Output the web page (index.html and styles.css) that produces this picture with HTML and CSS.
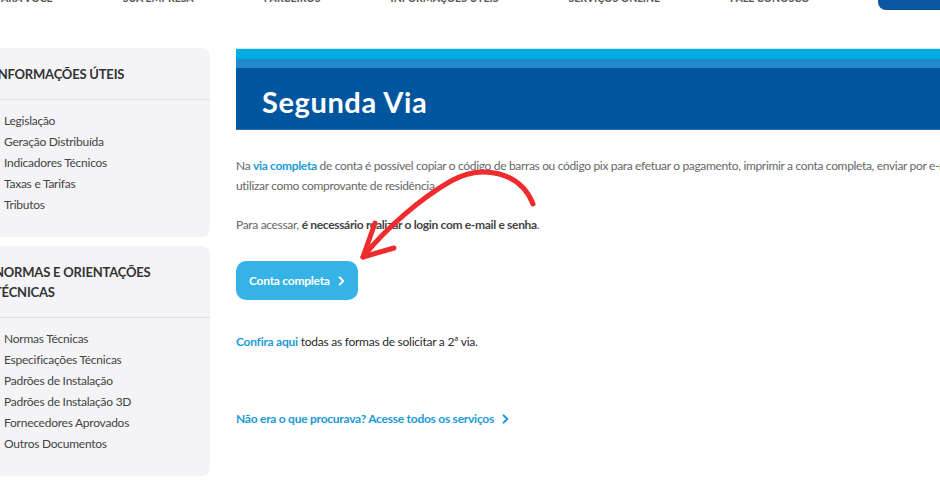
FILE: index.html
```html
<!DOCTYPE html>
<html lang="pt-BR">
<head>
    <meta charset="UTF-8">
    <meta name="viewport" content="width=device-width, initial-scale=1.0">
    <title>Segunda Via</title>
    <link rel="stylesheet" href="styles.css">
</head>
<body>
    <header class="topbar">
        <nav class="topnav">
            <a href="#">Para você</a>
            <a href="#">Sua empresa</a>
            <a href="#">Parceiros</a>
            <a href="#">Informações úteis</a>
            <a href="#">Serviços online</a>
            <a href="#">Fale conosco</a>
        </nav>
        <a class="agency-btn" href="#">Agência virtual</a>
    </header>

    <div class="layout">
        <aside class="sidebar">
            <div class="side-card">
                <h3 class="side-title">Informações úteis</h3>
                <ul class="side-list">
                    <li><a href="#">Legislação</a></li>
                    <li><a href="#">Geração Distribuída</a></li>
                    <li><a href="#">Indicadores Técnicos</a></li>
                    <li><a href="#">Taxas e Tarifas</a></li>
                    <li><a href="#">Tributos</a></li>
                </ul>
            </div>
            <div class="side-card">
                <h3 class="side-title">Normas e orientações técnicas</h3>
                <ul class="side-list">
                    <li><a href="#">Normas Técnicas</a></li>
                    <li><a href="#">Especificações Técnicas</a></li>
                    <li><a href="#">Padrões de Instalação</a></li>
                    <li><a href="#">Padrões de Instalação 3D</a></li>
                    <li><a href="#">Fornecedores Aprovados</a></li>
                    <li><a href="#">Outros Documentos</a></li>
                </ul>
            </div>
        </aside>

        <main class="content">
            <div class="banner">
                <div class="stripe-light"></div>
                <div class="stripe-mid"></div>
                <h1>Segunda Via</h1>
            </div>

            <p class="text">Na <a class="link" href="#">via completa</a> de conta é possível copiar o código de barras ou código pix para efetuar o pagamento, imprimir a conta completa, enviar por e-mail ou utilizar como comprovante de residência.</p>
            <p class="text">Para acessar, <strong>é necessário realizar o login com e-mail e senha</strong>.</p>

            <a class="button" href="#">
                Conta completa
                <svg width="7" height="10" viewBox="0 0 7 10"><path d="M1.6 1.4 L5.2 5 L1.6 8.6" fill="none" stroke="#fff" stroke-width="2" stroke-linecap="round" stroke-linejoin="round"/></svg>
            </a>

            <p class="note"><a class="link" href="#">Confira aqui</a> todas as formas de solicitar a 2ª via.</p>

            <a class="more" href="#">
                Não era o que procurava? Acesse todos os serviços
                <svg width="7" height="10" viewBox="0 0 7 10"><path d="M1.6 1.4 L5.2 5 L1.6 8.6" fill="none" stroke="#1c9ad6" stroke-width="2" stroke-linecap="round" stroke-linejoin="round"/></svg>
            </a>
        </main>
    </div>

    <!-- hand-drawn arrow pointing at the button -->
    <svg class="arrow" width="940" height="480" viewBox="0 0 940 480">
        <path d="M533 204 C520 171 481 164 451 181 C421 198 385 229 363 257" fill="none" stroke="#f02b2e" stroke-width="5" stroke-linecap="round"/>
        <path d="M375 223 L363 257 L394 248" fill="none" stroke="#f02b2e" stroke-width="5" stroke-linecap="round" stroke-linejoin="round"/>
    </svg>
</body>
</html>
```

FILE: styles.css
```css
:root {
    --blue-dark: #00559f;
    --blue-mid: #2389cd;
    --blue-light: #00ade1;
    --link-color: #1c9ad6;
    --button-color: #35b2e6;
    --text-color: #666;
    --side-bg: #f4f4f7;
}

* {
    margin: 0;
    padding: 0;
    box-sizing: border-box;
}

body {
    font-family: Lato, "Open Sans", sans-serif;
    color: var(--text-color);
    background: #fff;
    overflow: hidden;
    height: 480px;
}

a {
    text-decoration: none;
}

/* top navigation (scrolled mostly out of view) */
.topbar {
    display: flex;
    align-items: flex-start;
    height: 40px;
    margin-top: -30px;
    margin-left: -5px;
}

.topnav {
    display: flex;
    gap: 70px;
}

.topnav a {
    padding-top: 20px;
    line-height: 16px;
    font-size: 10.5px;
    font-weight: 700;
    text-transform: uppercase;
    color: #555;
    white-space: nowrap;
}

.agency-btn {
    margin-left: 68px;
    height: 40px;
    padding: 20px 18px 0;
    background: #0a56a1;
    color: #fff;
    font-size: 10.5px;
    font-weight: 700;
    text-transform: uppercase;
    border-radius: 0 0 8px 8px;
    white-space: nowrap;
}

/* page body */
.layout {
    display: flex;
    gap: 26px;
    margin-top: 38px;
    margin-left: -26px;
}

.sidebar {
    width: 236px;
    flex-shrink: 0;
    display: flex;
    flex-direction: column;
    gap: 9px;
}

.side-card {
    background: var(--side-bg);
    border-radius: 8px;
}

.side-title {
    padding: 16px 20px 15px;
    font-size: 13px;
    line-height: 20px;
    font-weight: 700;
    letter-spacing: -0.2px;
    text-transform: uppercase;
    color: #333;
    border-bottom: 1px solid #e0e0e4;
}

.side-list {
    list-style: none;
    padding: 10px 30px 22px;
}

.side-list li {
    line-height: 21px;
    font-size: 12px;
    letter-spacing: -0.25px;
}

.side-list a {
    color: #444;
}

.content {
    width: 770px;
    flex-shrink: 0;
}

.banner {
    border-top: 1px solid #d3eaf5;
}

.stripe-light {
    height: 10px;
    background: var(--blue-light);
}

.stripe-mid {
    height: 9px;
    background: var(--blue-mid);
}

.banner h1 {
    height: 62px;
    padding: 7px 26px 0;
    background: var(--blue-dark);
    border-bottom: 1px solid #2a6fb1;
    color: #fff;
    font-size: 29px;
    line-height: 54px;
    font-weight: 700;
    letter-spacing: 0.6px;
}

.text {
    margin-top: 26px;
    font-size: 12px;
    line-height: 20px;
    letter-spacing: -0.33px;
}

.text + .text {
    margin-top: 19px;
}

.text strong {
    color: #444;
    font-weight: 700;
}

.link {
    color: var(--link-color);
    font-weight: 700;
}

.button {
    display: inline-flex;
    align-items: center;
    gap: 8px;
    margin-top: 26px;
    height: 39px;
    padding: 0 13px;
    background: var(--button-color);
    border-radius: 10px;
    color: #fff;
    font-size: 12px;
    letter-spacing: -0.25px;
    font-weight: 700;
}

.note {
    margin-top: 32px;
    font-size: 12px;
    line-height: 20px;
    letter-spacing: -0.25px;
    color: #2b2b2b;
}

.more {
    display: inline-flex;
    align-items: center;
    gap: 8px;
    margin-top: 57px;
    line-height: 20px;
    font-size: 12px;
    letter-spacing: -0.25px;
    font-weight: 700;
    color: var(--link-color);
}

.arrow {
    position: absolute;
    top: 0;
    left: 0;
    pointer-events: none;
}
```
